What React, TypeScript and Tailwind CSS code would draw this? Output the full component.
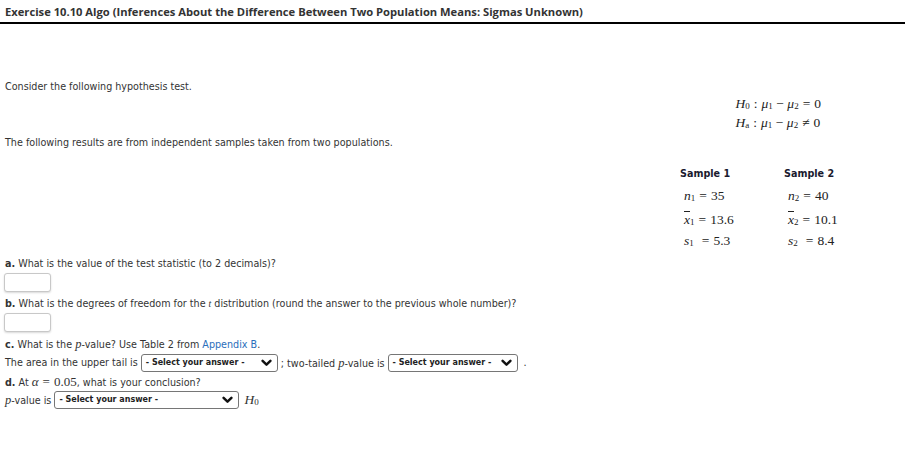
import React from 'react';

const body = { fontFamily: '"DejaVu Sans", Verdana, sans-serif' };
const mathFont = { fontFamily: '"Liberation Serif", "DejaVu Serif", serif' };

const V: React.FC<{ children: React.ReactNode }> = ({ children }) => (
  <span className="italic" style={mathFont}>{children}</span>
);

const Sub: React.FC<{ children: React.ReactNode }> = ({ children }) => (
  <sub className="text-[9px] not-italic relative top-[1px]">{children}</sub>
);

// operator with math spacing
const Op: React.FC<{ children: React.ReactNode; w?: string }> = ({ children, w = 'mx-[4px]' }) => (
  <span className={w}>{children}</span>
);

const Chevron = () => (
  <svg width="11" height="8" viewBox="0 0 11 8" className="shrink-0">
    <path d="M1.6 1.8 L5.5 5.6 L9.4 1.8" fill="none" stroke="#111" strokeWidth="2.5" strokeLinecap="round" strokeLinejoin="round" />
  </svg>
);

const Select: React.FC<{ width: string }> = ({ width }) => (
  <span
    className={`inline-flex items-center justify-between h-[18px] border border-[#767676] rounded-[3px] bg-white pl-[4px] pr-[5px] ${width}`}
  >
    <span className="text-[8px] font-bold text-[#222]">- Select your answer -</span>
    <Chevron />
  </span>
);

const Input = () => (
  <div className="w-[47px] h-[19px] border border-[#c8c8c8] rounded-[3px] bg-white shadow-[0_1px_2px_rgba(0,0,0,0.15)]" />
);

const Xbar = () => <span className="italic" style={{ ...mathFont, textDecoration: 'overline' }}>x</span>;

const rows: { a: React.ReactNode; b: React.ReactNode; mt: string }[] = [
  {
    a: <><V>n</V><Sub>1</Sub><Op>=</Op>35</>,
    b: <><V>n</V><Sub>2</Sub><Op>=</Op>40</>,
    mt: 'mt-[2px]',
  },
  {
    a: <><Xbar /><Sub>1</Sub><Op>=</Op>13.6</>,
    b: <><Xbar /><Sub>2</Sub><Op>=</Op>10.1</>,
    mt: 'mt-[4px]',
  },
  {
    a: <><V>s</V><Sub>1</Sub><Op w="ml-[8px] mr-[4px]">=</Op>5.3</>,
    b: <><V>s</V><Sub>2</Sub><Op w="ml-[8px] mr-[4px]">=</Op>8.4</>,
    mt: 'mt-[1px]',
  },
];

export default function App() {
  return (
    <div className="w-[905px] h-[465px] bg-white text-[#333] text-[9.6px] overflow-hidden" style={body}>
      {/* header */}
      <div className="border-b-2 border-black px-[5px] pt-[5px] pb-[3px]">
        <h1 className="text-[11.2px] font-bold text-[#333] leading-[14px]" style={{ fontFamily: '"Open Sans", sans-serif' }}>
          Exercise 10.10 Algo (Inferences About the Difference Between Two Population Means: Sigmas Unknown)
        </h1>
      </div>

      <div className="px-[5px]">
        <p className="mt-[56px] leading-[14px]">Consider the following hypothesis test.</p>

        {/* hypotheses */}
        <div className="flex justify-end pr-[79px] mt-[3px]">
          <div className="flex flex-col gap-[5px] text-[13.5px] text-[#222] leading-[14px]" style={mathFont}>
            <div>
              <V>H</V><Sub>0</Sub><Op>:</Op><V>μ</V><Sub>1</Sub><Op w="mx-[3.5px]">−</Op><V>μ</V><Sub>2</Sub><Op>=</Op>0
            </div>
            <div>
              <V>H</V><Sub>a</Sub><Op>:</Op><V>μ</V><Sub>1</Sub><Op w="mx-[3.5px]">−</Op><V>μ</V><Sub>2</Sub><Op>≠</Op>0
            </div>
          </div>
        </div>

        <p className="mt-[6px] leading-[14px]">The following results are from independent samples taken from two populations.</p>

        {/* samples table */}
        <div className="flex justify-end pr-[57px] mt-[14px]">
          <div className="w-[163px] flex flex-col">
            <div className="flex h-[20px] leading-[20px] font-bold text-[9.6px] text-[#1a1a2e]">
              <div className="w-[104px]">Sample 1</div>
              <div>Sample 2</div>
            </div>
            {rows.map((r, i) => (
              <div key={i} className={`flex h-[20px] leading-[20px] text-[13.5px] text-[#222] ${r.mt}`} style={mathFont}>
                <div className="w-[104px] pl-[4px]">{r.a}</div>
                <div className="pl-[4px]">{r.b}</div>
              </div>
            ))}
          </div>
        </div>

        {/* questions */}
        <div className="mt-[6px] flex flex-col">
          <p className="leading-[14px]"><b>a.</b> What is the value of the test statistic (to 2 decimals)?</p>
          <div className="mt-[2px] -ml-[1px]"><Input /></div>

          <p className="mt-[5px] leading-[14px]">
            <b>b.</b> What is the degrees of freedom for the <V>t</V> distribution (round the answer to the previous whole number)?
          </p>
          <div className="mt-[2px] -ml-[1px]"><Input /></div>

          <p className="mt-[5px] leading-[14px]">
            <b>c.</b> What is the <span className="text-[12.5px]"><V>p</V></span>-value? Use Table 2 from <span className="text-[#2a6ebb]">Appendix B</span>.
          </p>
          <div className="mt-[2px] h-[18px] flex items-center gap-[3px]">
            <span>The area in the upper tail is</span>
            <Select width="w-[137px]" />
            <span>; two-tailed <span className="text-[12.5px]"><V>p</V></span>-value is</span>
            <Select width="w-[130px]" />
            <span className="ml-[3px]">.</span>
          </div>

          <p className="mt-[3px] leading-[14px]">
            <b>d.</b> At <span className="text-[13px]" style={mathFont}><V>α</V><Op>=</Op>0.05</span>, what is your conclusion?
          </p>
          <div className="mt-[1px] h-[18px] flex items-center gap-[3px]">
            <span><span className="text-[12.5px]"><V>p</V></span>-value is</span>
            <Select width="w-[185px]" />
            <span className="text-[13.5px] ml-[2px]" style={mathFont}><V>H</V><Sub>0</Sub></span>
          </div>
        </div>
      </div>
    </div>
  );
}
